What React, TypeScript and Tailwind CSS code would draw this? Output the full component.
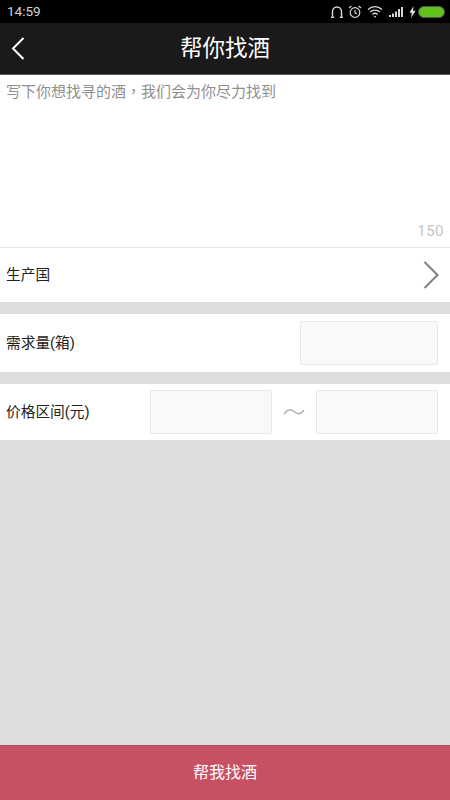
const cjk = "font-['Roboto','Noto_Sans_CJK_TC',sans-serif]";

function StatusIcons() {
  return (
    <div className="flex items-center">
      {/* headset */}
      <svg width="14" height="14" viewBox="0 0 14 14" fill="none" stroke="#d8d8d8" strokeWidth="1.4">
        <path d="M2.5 11.5V6.5a4.5 4.5 0 0 1 9 0v5" />
        <path d="M1 12.3h3.2M9.8 12.3H13" />
      </svg>
      {/* alarm */}
      <svg width="14" height="14" viewBox="0 0 14 14" fill="none" stroke="#d8d8d8" strokeWidth="1.2" className="ml-[4px]">
        <circle cx="7" cy="7.5" r="4.8" />
        <path d="M7 5v2.8l2 1M1 3l2.4-2M13 3l-2.4-2" />
      </svg>
      {/* wifi */}
      <svg width="16" height="14" viewBox="0 0 16 14" fill="none" stroke="#d8d8d8" strokeWidth="1.3" className="ml-[5px]">
        <path d="M1 4.5a10 10 0 0 1 14 0M3.2 7a7 7 0 0 1 9.6 0M5.4 9.4a4 4 0 0 1 5.2 0" />
        <path d="M8 12.8l-1.2-1.6a2 2 0 0 1 2.4 0z" fill="#d8d8d8" stroke="none" />
      </svg>
      {/* signal */}
      <svg width="15" height="12" viewBox="0 0 15 12" fill="#d8d8d8" className="ml-[6px]">
        <rect x="0" y="9" width="2" height="2" />
        <rect x="3" y="7.5" width="2" height="3.5" />
        <rect x="6" y="5.5" width="2" height="5.5" />
        <rect x="9" y="3" width="2" height="8" />
        <rect x="12" y="1" width="2" height="10" />
      </svg>
      {/* charging bolt */}
      <svg width="7" height="12" viewBox="0 0 7 12" fill="#e4e4e4" className="ml-[5px]">
        <path d="M4.5 0L0.5 6.8h2.4L2 12l4.5-7.2H4z" />
      </svg>
      {/* battery */}
      <div className="ml-[2px] h-[12px] w-[27px] rounded-[6px] border border-[#555] bg-[#62c01c]" />
    </div>
  );
}

function Field({ className }: { className: string }) {
  return <div className={`h-[44px] rounded-[2px] border border-[#e6e6e6] bg-[#f9f9f9] ${className}`} />;
}

export default function App() {
  return (
    <div className={`flex h-[800px] w-[450px] flex-col bg-[#dedede] ${cjk}`}>
      {/* Status bar */}
      <div className="flex h-[23px] items-center justify-between bg-black pl-[7px] pr-[5px]">
        <span className="text-[13.5px] text-[#d4d4d4]">14:59</span>
        <StatusIcons />
      </div>

      {/* Nav bar */}
      <div className="relative flex h-[52px] items-center justify-center border-b border-[#555] bg-[#1a1a1a]">
        <svg width="16" height="24" viewBox="0 0 16 24" fill="none" stroke="white" strokeWidth="2" className="absolute left-[10px] top-[13px]">
          <path d="M13.5 2L3 12.5 13.5 23" />
        </svg>
        <h1 className="text-[22.5px] font-normal leading-none text-white">帮你找酒</h1>
      </div>

      {/* Request text */}
      <div className="flex h-[172px] flex-col justify-between bg-white pb-[6px] pl-[6px] pr-[6px] pt-[7px]">
        <p className="text-[15px] leading-[20px] text-[#8f8f8f]">写下你想找寻的酒，我们会为你尽力找到</p>
        <span className="self-end text-[15px] leading-[20px] tracking-[0.5px] text-[#c4c4c4]">150</span>
      </div>

      {/* Country */}
      <div className="flex h-[55px] items-center justify-between border-t border-[#e6e6e6] bg-white pl-[6px] pr-[10px]">
        <span className="text-[14.7px] text-[#222]">生产国</span>
        <svg width="18" height="30" viewBox="0 0 18 30" fill="none" stroke="#808080" strokeWidth="2">
          <path d="M2.5 2L15.5 15 2.5 28" />
        </svg>
      </div>

      {/* Quantity */}
      <div className="mt-[12px] flex h-[58px] items-center justify-between bg-white pl-[6px] pr-[12px]">
        <span className="text-[14.7px] text-[#222]">需求量(箱)</span>
        <Field className="w-[138px]" />
      </div>

      {/* Price range */}
      <div className="mt-[12px] flex h-[56px] items-center bg-white pl-[6px] pr-[12px]">
        <span className="w-[144px] text-[14.7px] text-[#222]">价格区间(元)</span>
        <Field className="w-[122px]" />
        <span className="flex w-[44px] justify-center">
          <svg width="22" height="10" viewBox="0 0 22 10" fill="none" stroke="#b4b4b4" strokeWidth="1.6">
            <path d="M1 7C5 1.5 8 2 11 4.5S17 8.5 21 3" />
          </svg>
        </span>
        <Field className="w-[122px]" />
      </div>

      {/* Submit */}
      <button className="mt-auto h-[55px] w-full border-t border-[#b04a5a] bg-[#c75163] text-[16px] text-white">帮我找酒</button>
    </div>
  );
}
